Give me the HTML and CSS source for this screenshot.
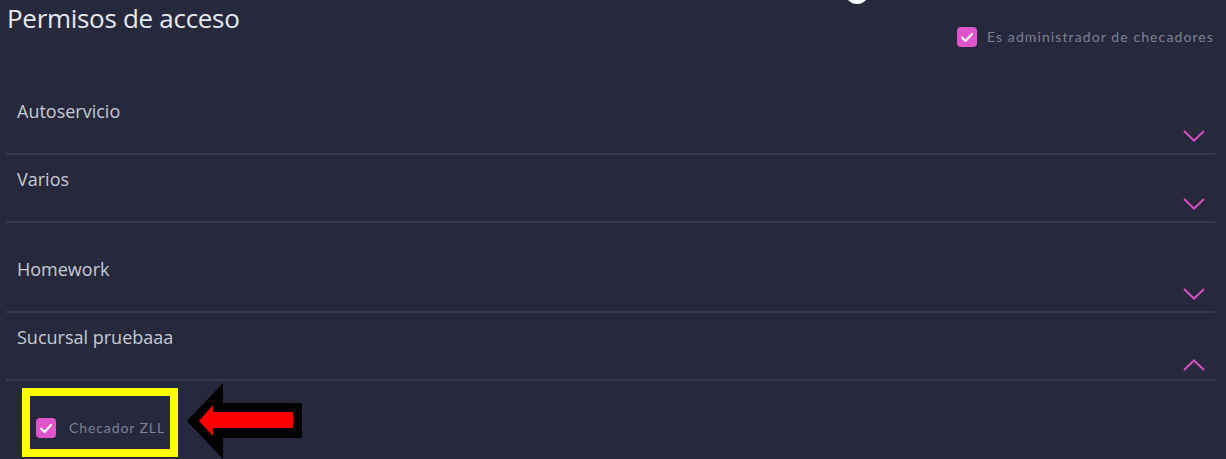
FILE: index.html
```html
<!DOCTYPE html>
<html lang="es">

<head>
    <meta charset="UTF-8">
    <meta name="viewport" content="width=device-width, initial-scale=1.0">
    <title>Permisos de acceso</title>
    <link rel="stylesheet" href="styles.css">
</head>

<body>
    <!-- knob of the switch above, only its bottom shows -->
    <div class="knob"></div>

    <h1 class="page-title">Permisos de acceso</h1>

    <div class="admin-row">
        <label class="check">
            <svg class="check-box" viewBox="0 0 20 20"><rect width="20" height="20" rx="4" fill="#e155cc"/><polyline points="5,10.5 8.5,14 15,7" fill="none" stroke="#fff" stroke-width="2" stroke-linecap="round" stroke-linejoin="round"/></svg>
            <span class="check-label">Es administrador de checadores</span>
        </label>
    </div>

    <div class="sections">
        <div class="section">
            <div class="section-title">Autoservicio</div>
            <div class="section-toggle">
                <svg class="chevron" viewBox="0 0 22 12"><polyline points="1,1 11,10.5 21,1"/></svg>
            </div>
        </div>
        <div class="section">
            <div class="section-title">Varios</div>
            <div class="section-toggle">
                <svg class="chevron" viewBox="0 0 22 12"><polyline points="1,1 11,10.5 21,1"/></svg>
            </div>
        </div>
        <div class="section section-tall">
            <div class="section-title">Homework</div>
            <div class="section-toggle">
                <svg class="chevron" viewBox="0 0 22 12"><polyline points="1,1 11,10.5 21,1"/></svg>
            </div>
        </div>
        <div class="section section-open">
            <div class="section-title">Sucursal pruebaaa</div>
            <div class="section-toggle">
                <svg class="chevron" viewBox="0 0 22 12"><polyline points="1,11 11,1.5 21,11"/></svg>
            </div>
        </div>
        <div class="section-body">
            <label class="check check-marked">
                <svg class="check-box" viewBox="0 0 20 20"><rect width="20" height="20" rx="4" fill="#e155cc"/><polyline points="5,10.5 8.5,14 15,7" fill="none" stroke="#fff" stroke-width="2" stroke-linecap="round" stroke-linejoin="round"/></svg>
                <span class="check-label">Checador ZLL</span>
            </label>
        </div>
    </div>

    <!-- annotation arrow -->
    <svg class="arrow" viewBox="0 0 125 79">
        <polygon points="7,41 43,3 43,23 122,23 122,58 43,58 43,79" fill="#000"/>
        <polygon points="19,41 33,25 33,32 113,32 113,48 33,48 33,56" fill="#ff0000"/>
    </svg>
</body>

</html>
```

FILE: styles.css
```css
body {
    margin: 0;
    background-color: #26293c;
    font-family: 'Open Sans', 'Noto Sans', sans-serif;
    color: #c7c9d3;
    overflow: hidden;
}

.knob {
    position: absolute;
    left: 845px;
    top: -20px;
    width: 24px;
    height: 24px;
    border-radius: 50%;
    background: #fff;
}

.page-title {
    margin: 0;
    padding-left: 7px;
    height: 27px;
    font-size: 26px;
    font-weight: 400;
    line-height: 36px;
    letter-spacing: -0.3px;
    color: #e6e8ef;
}

.admin-row {
    display: flex;
    justify-content: flex-end;
    padding-right: 12px;
}

.check {
    display: flex;
    align-items: center;
    gap: 10px;
}

.check-box {
    width: 20px;
    height: 20px;
    flex: none;
}

.check-label {
    font-family: 'Lato', sans-serif;
    font-size: 14px;
    line-height: 20px;
    letter-spacing: 1.1px;
    color: #7c8090;
}

.sections {
    margin: 40px 11px 0 6px;
}

.section {
    padding: 12px 10px 0 11px;
    border-bottom: 2px solid #363a4d;
}

.section-tall {
    padding-top: 34px;
}

.section-title {
    font-size: 18px;
    line-height: 24px;
}

.section-toggle {
    display: flex;
    justify-content: flex-end;
    align-items: flex-start;
    height: 30px;
    padding-top: 7px;
    box-sizing: border-box;
}

.section-open .section-toggle {
    padding-top: 10px;
}

.chevron {
    width: 22px;
    height: 12px;
    fill: none;
    stroke: #d24fbd;
    stroke-width: 2;
}

.section-body {
    padding: 7px 0 0 16px;
}

.check-marked {
    display: inline-flex;
    gap: 13px;
    padding: 22px 5px 11px 6px;
    border: 8px solid #ffff00;
}

.check-marked .check-label {
    letter-spacing: 0.9px;
}

.arrow {
    position: absolute;
    left: 180px;
    top: 380px;
    width: 125px;
    height: 79px;
}
```
